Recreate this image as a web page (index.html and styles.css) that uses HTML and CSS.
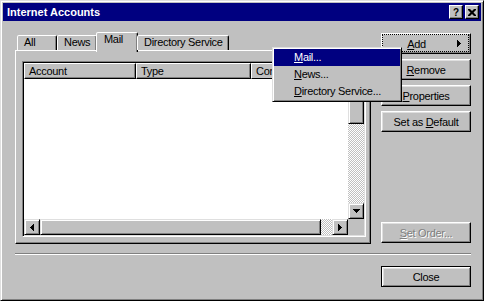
FILE: index.html
```html
<!DOCTYPE html>
<html lang="en">
<head>
  <meta charset="UTF-8">
  <title>Internet Accounts</title>
  <link rel="stylesheet" href="styles.css">
</head>
<body>
  <div class="window">
    <div class="titlebar">
      <span class="title">Internet Accounts</span>
      <div class="caption-btns">
        <span class="cap-btn cap-help">?</span>
        <span class="cap-btn">
          <svg width="8" height="7" viewBox="0 0 8 7"><path d="M0 0h2l2 2 2-2h2v1L5.5 3.5 8 6v1H6L4 5 2 7H0V6l2.5-2.5L0 1z"/></svg>
        </span>
      </div>
    </div>

    <div class="content">
      <div class="main">
        <div class="tabs-area">
          <div class="tabstrip">
            <div class="tab">All</div>
            <div class="tab">News</div>
            <div class="tab active">Mail</div>
            <div class="tab">Directory Service</div>
          </div>
          <div class="panel">
            <div class="listview">
              <div class="list-main">
                <div class="list-header">
                  <div class="col col-account">Account</div>
                  <div class="col col-type">Type</div>
                  <div class="col col-conn">Connection</div>
                </div>
                <div class="list-body"></div>
              </div>
              <div class="vscroll">
                <div class="sb-btn">
                  <svg width="7" height="4" viewBox="0 0 7 4"><path d="M3 0h1v1h1v1h1v1h1v1H0V3h1V2h1V1h1z"/></svg>
                </div>
                <div class="sb-thumb thumb-v"></div>
                <div class="sb-track"></div>
                <div class="sb-btn">
                  <svg width="7" height="4" viewBox="0 0 7 4"><path d="M0 0h7v1h-1v1h-1v1h-1v1h-1v-1h-1v-1h-1v-1h-1z"/></svg>
                </div>
              </div>
              <div class="hscroll">
                <div class="sb-btn">
                  <svg width="4" height="7" viewBox="0 0 4 7"><path d="M4 0v7h-1v-1h-1v-1h-1v-1h-1v-1h1v-1h1v-1h1v-1z"/></svg>
                </div>
                <div class="sb-thumb thumb-h"></div>
                <div class="sb-track track-h"></div>
                <div class="sb-btn">
                  <svg width="4" height="7" viewBox="0 0 4 7"><path d="M0 0v7h1v-1h1v-1h1v-1h1v-1h-1v-1h-1v-1h-1v-1z"/></svg>
                </div>
              </div>
              <div class="sb-corner"></div>
            </div>
          </div>
        </div>

        <div class="side-buttons">
          <button class="btn btn-add">
            <span class="label"><u>A</u>dd</span>
            <svg width="4" height="7" viewBox="0 0 4 7"><path d="M0 0v7h1v-1h1v-1h1v-1h1v-1h-1v-1h-1v-1h-1v-1z"/></svg>
          </button>
          <button class="btn"><u>R</u>emove</button>
          <button class="btn"><u>P</u>roperties</button>
          <button class="btn">Set as <u>D</u>efault</button>
          <button class="btn btn-disabled set-order"><u>S</u>et Order...</button>
        </div>
      </div>

      <div class="separator"></div>

      <div class="footer">
        <button class="btn btn-default">Close</button>
      </div>
    </div>

    <div class="popup-menu">
      <div class="menu-item selected"><u>M</u>ail...</div>
      <div class="menu-item"><u>N</u>ews...</div>
      <div class="menu-item"><u>D</u>irectory Service...</div>
    </div>
  </div>
</body>
</html>
```

FILE: styles.css
```css
* {
  box-sizing: border-box;
}
body {
  margin: 0;
  font-family: "Liberation Sans", Arial, sans-serif;
  font-size: 11px;
  letter-spacing: -0.3px;
  color: #000;
  background: #c0c0c0;
}
u {
  text-underline-offset: 1px;
}
.window {
  position: relative;
  width: 484px;
  height: 301px;
  padding: 2px;
  background: #c0c0c0;
  border: 1px solid;
  border-color: #dfdfdf #000 #000 #dfdfdf;
  box-shadow: inset 1px 1px #fff, inset -1px -1px #808080;
}
.titlebar {
  height: 18px;
  display: flex;
  align-items: center;
  justify-content: space-between;
  padding: 0 2px 0 4px;
  background: #000080;
  color: #fff;
}
.title {
  font-weight: bold;
  letter-spacing: 0;
}
.caption-btns {
  display: flex;
  gap: 2px;
}
.cap-btn {
  width: 14px;
  height: 14px;
  display: flex;
  align-items: center;
  justify-content: center;
  background: #c0c0c0;
  color: #000;
  border: 1px solid;
  border-color: #fff #000 #000 #fff;
  box-shadow: inset -1px -1px #808080;
}
.cap-help {
  font-weight: bold;
  font-size: 10px;
  letter-spacing: 0;
}
.content {
  padding: 11px 10px 0 12px;
}
.main {
  display: flex;
  gap: 10px;
}
.tabs-area {
  width: 356px;
  display: flex;
  flex-direction: column;
}
.tabstrip {
  height: 18px;
  display: flex;
  align-items: flex-end;
  padding-left: 2px;
  position: relative;
  z-index: 1;
}
.tab {
  height: 15px;
  min-width: 40px;
  padding: 0 5px 0 6px;
  line-height: 13px;
  white-space: nowrap;
  background: #c0c0c0;
  border: 1px solid;
  border-bottom: none;
  border-color: #fff #000 transparent #fff;
  border-radius: 2px 2px 0 0;
  box-shadow: inset -1px 0 #808080;
}
.tab.active {
  height: 20px;
  min-width: 42px;
  margin: 0 -1px -2px -1px;
  padding: 0 7px;
}
.panel {
  height: 194px;
  padding: 10px 4px 6px 6px;
  border: 1px solid;
  border-color: #fff #000 #000 #fff;
  box-shadow: inset -1px -1px #808080;
}
.listview {
  height: 100%;
  display: grid;
  grid-template-columns: 1fr 16px;
  grid-template-rows: 1fr 16px;
  padding: 1px;
  background: #fff;
  border: 1px solid;
  border-color: #808080 #fff #fff #808080;
  box-shadow: inset 1px 1px #000, inset -1px -1px #dfdfdf;
}
.list-main {
  display: flex;
  flex-direction: column;
  min-width: 0;
  overflow: hidden;
}
.list-header {
  display: flex;
  height: 16px;
  flex-shrink: 0;
}
.col {
  height: 16px;
  padding: 0 4px;
  line-height: 14px;
  white-space: nowrap;
  flex-shrink: 0;
  background: #c0c0c0;
  border: 1px solid;
  border-color: #fff #000 #000 #fff;
  box-shadow: inset -1px -1px #808080;
}
.col-account {
  width: 112px;
}
.col-type {
  width: 115px;
}
/* the popup menu hides everything right of "Con" */
.col-conn {
  width: 22px;
  overflow: hidden;
  border-right: none;
  box-shadow: none;
}
.list-body {
  flex: 1;
}
.vscroll {
  display: flex;
  flex-direction: column;
}
.hscroll {
  display: flex;
}
.sb-btn,
.sb-thumb {
  flex-shrink: 0;
  width: 16px;
  height: 16px;
  display: flex;
  align-items: center;
  justify-content: center;
  background: #c0c0c0;
  border: 1px solid;
  border-color: #dfdfdf #000 #000 #dfdfdf;
  box-shadow: inset 1px 1px #fff, inset -1px -1px #808080;
}
.thumb-v {
  height: 45px;
}
.thumb-h {
  flex: 1;
  width: auto;
}
.sb-track {
  flex: 1;
  background-color: #fff;
  background-image: repeating-conic-gradient(#c0c0c0 0 25%, #fff 0 50%);
  background-size: 2px 2px;
}
.track-h {
  flex: 0 0 11px;
}
.sb-corner {
  background: #c0c0c0;
}
.side-buttons {
  width: 90px;
  display: flex;
  flex-direction: column;
  gap: 5px;
  padding: 1px 0;
}
.btn {
  width: 90px;
  height: 21px;
  padding: 0;
  font: inherit;
  letter-spacing: inherit;
  color: #000;
  background: #c0c0c0;
  border: 1px solid;
  border-color: #fff #000 #000 #fff;
  box-shadow: inset -1px -1px #808080, inset 1px 1px #dfdfdf;
}
.btn-add {
  position: relative;
  display: flex;
  align-items: center;
}
.btn-add .label {
  flex: 1;
  text-align: center;
}
.btn-add svg {
  margin: 0 9px 0 6px;
}
.btn-add::after {
  content: "";
  position: absolute;
  inset: 0 1px 1px 0;
  border: 1px dotted #000;
}
.set-order {
  margin-top: auto;
}
.btn-disabled {
  color: #808080;
  text-shadow: 1px 1px #fff;
}
.btn-default {
  border-color: #000;
  box-shadow: inset 1px 1px #fff, inset -1px -1px #808080, inset 2px 2px #dfdfdf;
}
.separator {
  margin-top: 9px;
  height: 2px;
  border-top: 1px solid #808080;
  border-bottom: 1px solid #fff;
}
.footer {
  display: flex;
  justify-content: flex-end;
  margin-top: 11px;
}
.popup-menu {
  position: absolute;
  left: 271px;
  top: 46px;
  width: 130px;
  padding: 1px;
  background: #c0c0c0;
  border: 1px solid;
  border-color: #dfdfdf #000 #000 #dfdfdf;
  box-shadow: inset 1px 1px #fff, inset -1px -1px #808080;
}
.menu-item {
  height: 17px;
  line-height: 17px;
  padding-left: 20px;
  white-space: nowrap;
}
.menu-item.selected {
  background: #000080;
  color: #fff;
}
```
